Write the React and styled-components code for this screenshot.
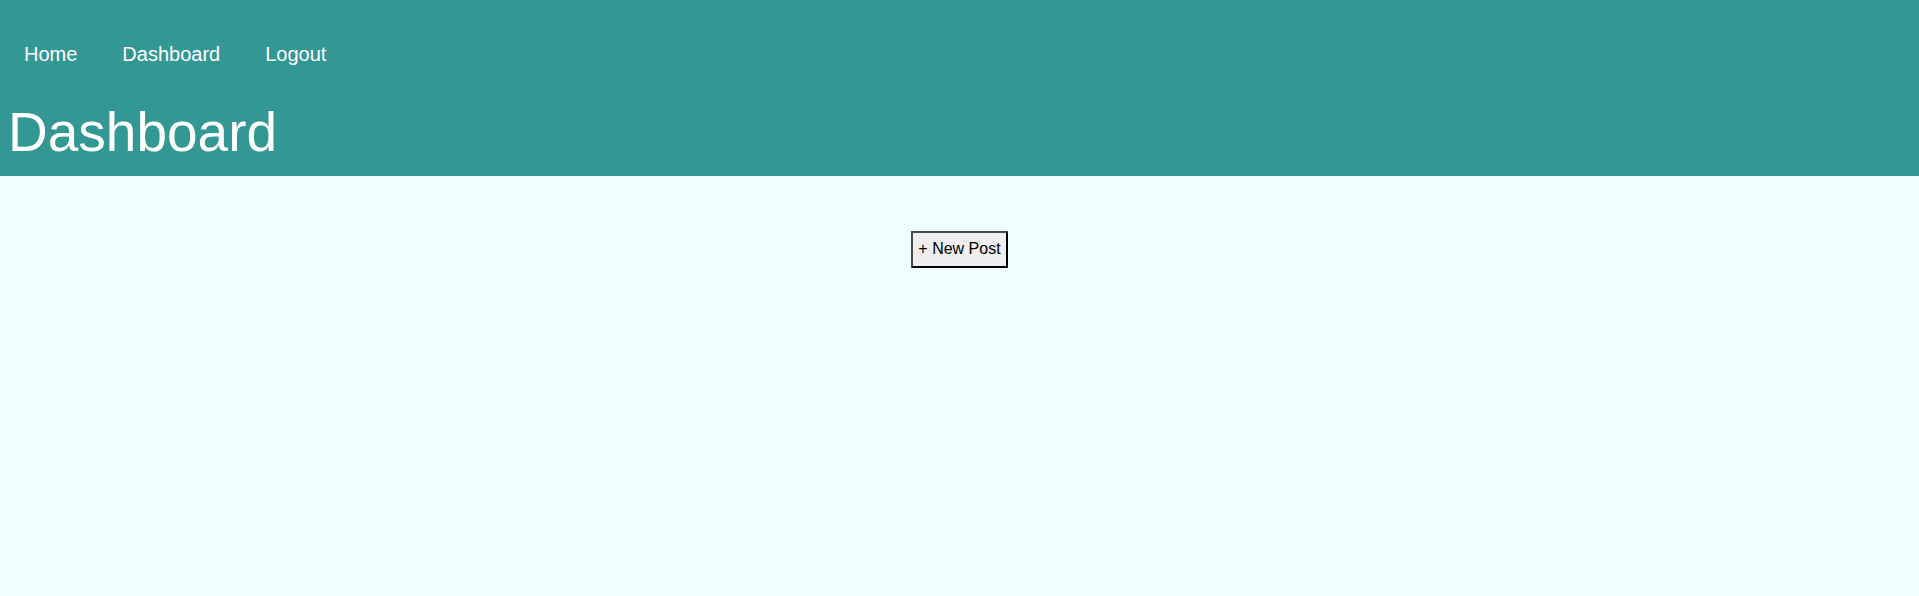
import styled, { createGlobalStyle } from 'styled-components';

const GlobalStyle = createGlobalStyle`
  html, body {
    margin: 0;
    padding: 0;
    min-height: 100%;
    background: azure;
    font-family: 'Liberation Sans', Arial, sans-serif;
  }
`;

const Header = styled.header`
  background: #339894;
  color: #fff;
  padding: 0 8px 12px;
`;

const Nav = styled.nav`
  display: flex;
  gap: 45px;
  padding: 43px 0 0 16px;
`;

const NavLink = styled.a`
  color: #fff;
  font-size: 20px;
  text-decoration: none;
  cursor: pointer;
`;

const Title = styled.h1`
  margin: 34px 0 0;
  font-size: 55px;
  font-weight: 400;
  line-height: normal;
`;

const Main = styled.main`
  display: flex;
  justify-content: center;
  padding-top: 55px;
`;

const NewPostButton = styled.button`
  font-family: 'Liberation Sans', Arial, sans-serif;
  font-size: 16px;
  color: #000;
  background: #efefef;
  padding: 7px 5px 8px;
  border: 2px solid;
  border-color: #4a4a4a #000 #000 #4a4a4a;
  cursor: pointer;
`;

const App = () => (
  <>
    <GlobalStyle />
    <Header>
      <Nav>
        <NavLink>Home</NavLink>
        <NavLink>Dashboard</NavLink>
        <NavLink>Logout</NavLink>
      </Nav>
      <Title>Dashboard</Title>
    </Header>
    <Main>
      <NewPostButton>+ New Post</NewPostButton>
    </Main>
  </>
);

export default App;
